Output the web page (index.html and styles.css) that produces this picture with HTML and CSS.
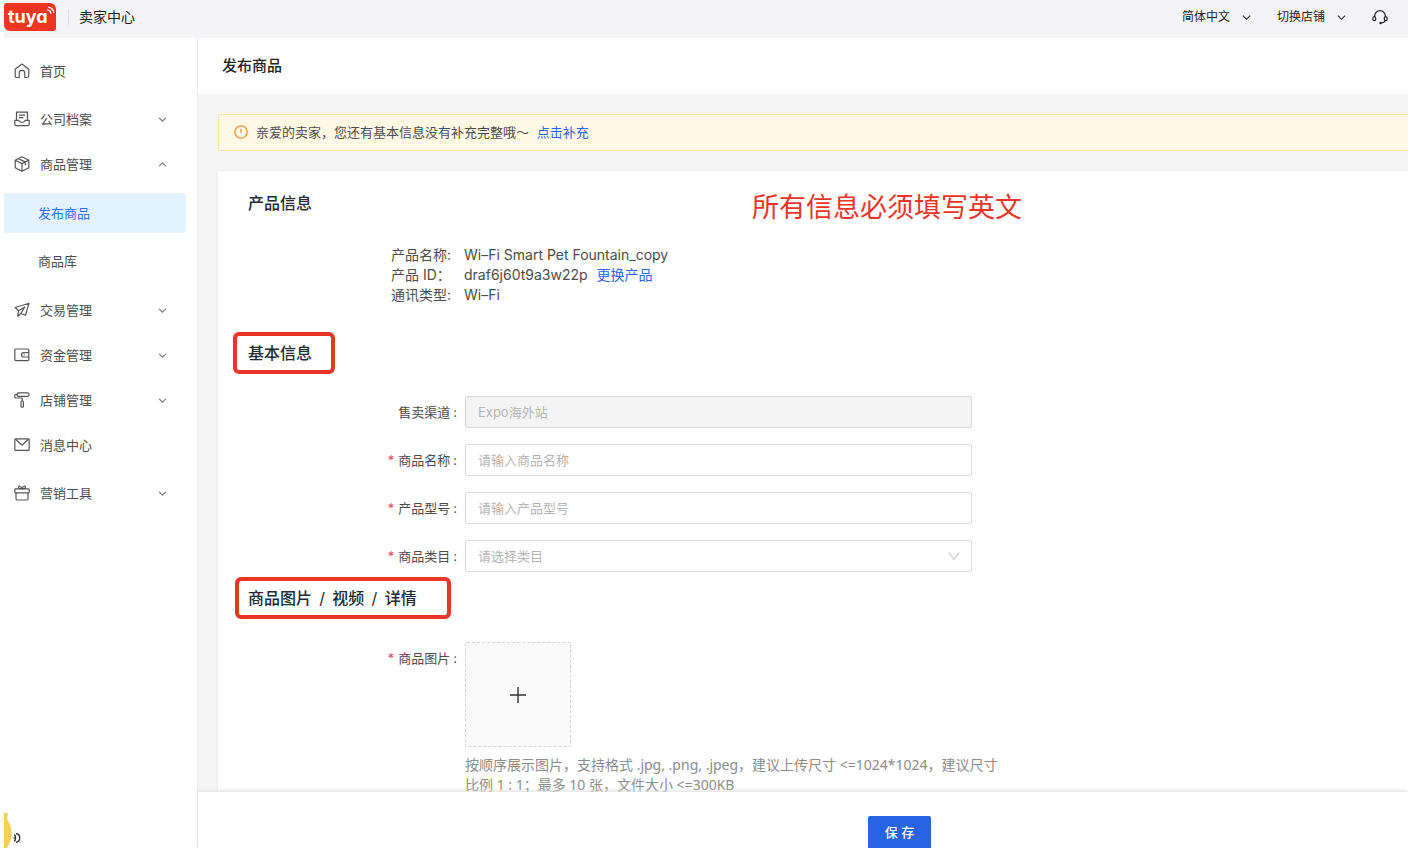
FILE: index.html
```html
<!DOCTYPE html>
<html lang="zh-CN">
<head>
<meta charset="utf-8">
<meta name="viewport" content="width=device-width, initial-scale=1">
<title>发布商品 - 卖家中心</title>
<link rel="stylesheet" href="styles.css">
</head>
<body>
<header class="topbar">
  <a class="logo" href="#">tuya
    <svg class="logo-waves" viewBox="0 0 10 10"><path d="M1 4.4a5 5 0 0 1 4.6 4.4M2.4 1.2a7.6 7.6 0 0 1 6.4 6.6"/></svg>
  </a>
  <span class="divider"></span>
  <span class="site-name">卖家中心</span>
  <div class="tools">
    <button class="tool" type="button">简体中文
      <svg class="caret" viewBox="0 0 10 10"><path d="M1 3l4 4 4-4"/></svg>
    </button>
    <button class="tool" type="button">切换店铺
      <svg class="caret" viewBox="0 0 10 10"><path d="M1 3l4 4 4-4"/></svg>
    </button>
    <button class="tool" type="button" aria-label="客服">
      <svg class="headset" viewBox="0 0 16 16"><path d="M2.700 8.200V7a5.300 5.300 0 0 1 10.600 0v1.200M13.200 11.500c-.5 1.300-2 2.300-3.900 2.500"/><ellipse cx="2.300" cy="9.700" rx="1.500" ry="2"/><ellipse cx="13.700" cy="9.700" rx="1.500" ry="2"/><circle class="solid" cx="8.600" cy="14" r="1.200"/></svg>
    </button>
  </div>
</header>

<div class="shell">
  <aside class="sidebar">
    <nav>
      <ul class="menu">
        <li class="spaced"><a class="item" href="#">
          <svg class="icon" viewBox="0 0 16 16"><path d="M3 14.500c-1.200 0-1.800-.6-1.800-1.800V6.300L8 1l6.800 5.300v6.400c0 1.200-.6 1.800-1.800 1.800h-2.200V10.200a2.800 2.800 0 0 0-5.600 0v4.300z"/></svg>
          <span class="name">首页</span></a></li>
        <li><a class="item" href="#">
          <svg class="icon" viewBox="0 0 16 16"><path d="M2.500 9V1.200h11V9M5 4.200h6M5 6.700h4.500M.8 9.300h4c.4 1.500 1.400 2 3.200 2s2.800-.5 3.200-2h4v4c0 1-.4 1.400-1.400 1.400H2.200c-1 0-1.400-.4-1.400-1.400z"/></svg>
          <span class="name">公司档案</span>
          <svg class="arrow" viewBox="0 0 8 8"><path d="M1 2.500l3 3 3-3"/></svg></a></li>
        <li><a class="item" href="#">
          <svg class="icon" viewBox="0 0 16 16"><path d="M8 .8l6.800 3.400v7.600L8 15.300l-6.800-3.500V4.200zM1.200 4.200L8 7.600l6.800-3.400M8 7.600v7.700M4.500 2.600l6.900 3.500v3.200"/></svg>
          <span class="name">商品管理</span>
          <svg class="arrow" viewBox="0 0 8 8"><path d="M1 5.500l3-3 3 3"/></svg></a>
          <ul class="submenu">
            <li><a class="subitem current" href="#">发布商品</a></li>
            <li><a class="subitem" href="#">商品库</a></li>
          </ul></li>
        <li><a class="item" href="#">
          <svg class="icon" viewBox="0 0 16 16"><path d="M15 1.200L1.200 5.500 4.600 8.800 3.600 14.200l3.200-2.700 4.700 1.800zM4.600 8.800L10.800 5 6.800 11.500"/></svg>
          <span class="name">交易管理</span>
          <svg class="arrow" viewBox="0 0 8 8"><path d="M1 2.500l3 3 3-3"/></svg></a></li>
        <li><a class="item" href="#">
          <svg class="icon" viewBox="0 0 16 16"><rect x=".8" y="2" width="14" height="11.600" rx="1"/><path d="M14.800 5.600H9.700a2.200 2.200 0 0 0 0 4.400h5.100M9.700 7.800h1"/></svg>
          <span class="name">资金管理</span>
          <svg class="arrow" viewBox="0 0 8 8"><path d="M1 2.500l3 3 3-3"/></svg></a></li>
        <li><a class="item" href="#">
          <svg class="icon" viewBox="0 0 16 16"><rect x="3" y=".8" width="12" height="3.600" rx="1.400"/><path d="M3 2.600H1.600c-.6 0-.9.4-.9 1V5c0 .7.4 1 1 1h6.500V9"/><rect x="7" y="9" width="2.400" height="6.200" rx="1"/></svg>
          <span class="name">店铺管理</span>
          <svg class="arrow" viewBox="0 0 8 8"><path d="M1 2.500l3 3 3-3"/></svg></a></li>
        <li class="spaced"><a class="item" href="#">
          <svg class="icon" viewBox="0 0 16 16"><rect x=".8" y="1.800" width="14.400" height="11.600" rx="1"/><path d="M1.600 2.300l5.600 5.200c.5.500 1.100.5 1.600 0l5.600-5.200"/></svg>
          <span class="name">消息中心</span></a></li>
        <li><a class="item" href="#">
          <svg class="icon" viewBox="0 0 16 16"><rect x=".8" y="3.800" width="14.400" height="4" rx=".8"/><path d="M2 7.800v6c0 .9.300 1.200 1.200 1.200h9.600c.9 0 1.200-.3 1.200-1.200v-6M8 3.800C6.800 3.800 4.500 3.400 4.500 2.200c0-1.500 2.800-1.600 3.500 1.600.7-3.200 3.500-3.100 3.500-1.600 0 1.200-2.300 1.600-3.500 1.600z"/></svg>
          <span class="name">营销工具</span>
          <svg class="arrow" viewBox="0 0 8 8"><path d="M1 2.500l3 3 3-3"/></svg></a></li>
      </ul>
    </nav>
  </aside>

  <main class="main">
    <div class="page-head"><h1>发布商品</h1></div>
    <div class="content">
      <div class="alert">
        <svg class="alert-icon" viewBox="0 0 14 14"><circle cx="7" cy="7" r="6.200"/><path d="M7 3.800v4"/></svg>
        <span>亲爱的卖家，您还有基本信息没有补充完整哦～ <a class="fill-link" href="#">点击补充</a></span>
      </div>

      <form class="card" id="product-form">
        <div class="card-head">
          <h2>产品信息</h2>
          <p class="note">所有信息必须填写英文</p>
        </div>
        <dl class="facts">
          <dt>产品名称:</dt><dd>Wi–Fi Smart Pet Fountain_copy</dd>
          <dt>产品 ID：</dt><dd>draf6j60t9a3w22p <a class="change" href="#">更换产品</a></dd>
          <dt>通讯类型:</dt><dd>Wi–Fi</dd>
        </dl>

        <h2 class="marked basic">基本信息</h2>
        <div class="fields">
          <label for="channel">售卖渠道</label>
          <input id="channel" type="text" placeholder="Expo海外站" disabled>
          <label class="required" for="name">商品名称</label>
          <input id="name" type="text" placeholder="请输入商品名称">
          <label class="required" for="model">产品型号</label>
          <input id="model" type="text" placeholder="请输入产品型号">
          <label class="required" for="category">商品类目</label>
          <div class="select">
            <select id="category"><option>请选择类目</option></select>
            <svg class="select-arrow" viewBox="0 0 12 12"><path d="M1 2.500l5 7 5-7"/></svg>
          </div>
        </div>

        <h2 class="marked media">商品图片 <span class="slash">/</span> 视频 <span class="slash">/</span> 详情</h2>
        <div class="fields upload">
          <label class="required" for="pictures">商品图片</label>
          <div>
            <button class="picker" id="pictures" type="button">
              <svg class="plus" viewBox="0 0 18 18"><path d="M9 1v16M1 9h16"/></svg>
            </button>
            <p class="hint">按顺序展示图片，支持格式 .jpg, .png, .jpeg，建议上传尺寸 &lt;=1024*1024，建议尺寸比例 1 : 1；最多 10 张，文件大小 &lt;=300KB</p>
          </div>
        </div>
      </form>
    </div>
    <footer class="actions">
      <button class="save" type="submit" form="product-form">保 存</button>
    </footer>
  </main>
</div>
<svg class="helper" viewBox="0 0 18 36"><path class="body" d="M0 1c3-1 5 1 3.500 3.500C2.800 6 3 7 4 9c5 8 5 17-1 27H0z"/><path class="wave" d="M10 23c2 0 2 6 0 6M12 21.500c5 1 5 7.500 0 9M9.500 26h1"/></svg>
</body>
</html>
```
FILE: styles.css
```css
* { box-sizing: border-box; }

body {
  margin: 0;
  padding-left: 4px;
  height: 100vh;
  overflow: hidden;
  display: flex;
  flex-direction: column;
  background: #fff;
  color: #4c4c4c;
  font: 13px/20px Inter, "Noto Sans CJK SC", sans-serif;
}

h1, h2, p, ul, dl, dd { margin: 0; padding: 0; }
ul { list-style: none; }
a { color: #2c62f0; text-decoration: none; }
button, input, select { font: inherit; color: inherit; }
svg { flex: none; fill: none; stroke: currentColor; }

.topbar {
  flex: none;
  height: 38px;
  display: flex;
  align-items: center;
  padding: 0 20px 4px 0;
  background: #f4f4f6;
  color: #222;
}
.logo {
  position: relative;
  width: 52px;
  height: 28px;
  padding-left: 4px;
  border-radius: 3px 6px 3px 6px;
  background: #ee3524;
  color: #fff;
  font-size: 18px;
  font-weight: 700;
  line-height: 27px;
  font-feature-settings: "cv11";
}
.logo-waves {
  position: absolute;
  top: 3px;
  right: 1px;
  width: 9px;
  height: 9px;
  stroke-width: 1.4;
}
.divider { width: 1px; height: 16px; margin: 0 10px 0 12px; background: #dcdce0; }
.site-name { font-size: 14px; }
.tools { margin-left: auto; display: flex; gap: 26px; }
.tool {
  display: flex;
  align-items: center;
  gap: 12px;
  padding: 0;
  border: 0;
  background: none;
  font-size: 12px;
}
.caret { width: 9px; height: 9px; stroke-width: 1.2; }
.headset { width: 16px; height: 16px; stroke-width: 1.2; }
.headset .solid { fill: currentColor; stroke: none; }

.shell { flex: 1; min-height: 0; display: flex; }
.sidebar {
  flex: none;
  width: 194px;
  padding: 13px 11px 0 0;
  border-right: 1px solid #ececee;
}
.menu { display: flex; flex-direction: column; gap: 5px; }
.spaced { margin-bottom: 3px; }
.item {
  display: flex;
  align-items: center;
  height: 40px;
  padding: 0 19px 0 10px;
  color: #4c4c4c;
}
.icon { width: 16px; height: 16px; margin-right: 10px; color: #555; stroke-width: 1.2; stroke-linejoin: round; }
.arrow { width: 9px; height: 9px; margin-left: auto; color: #777; }
.submenu { display: flex; flex-direction: column; gap: 8px; padding: 9px 0 4px; }
.subitem {
  display: block;
  padding-left: 34px;
  border-radius: 0 4px 4px 0;
  line-height: 40px;
  color: #4c4c4c;
}
.current { background: #e4f2fe; color: #2c6dff; }

.main { flex: 1; min-width: 0; display: flex; flex-direction: column; }
.page-head { flex: none; padding: 18px 24px; }
h1 { font-size: 15px; line-height: 20px; font-weight: 500; color: #222; }
.content {
  flex: 1;
  min-height: 0;
  overflow: hidden;
  padding: 20px 0 0 20px;
  background: #f5f5f6;
}
.alert {
  display: flex;
  align-items: center;
  gap: 8px;
  height: 37px;
  padding: 0 0 1px 15px;
  border: 1px solid #f8e3ab;
  border-right: 0;
  border-radius: 2px 0 0 2px;
  background: #fff8e5;
}
.alert-icon { width: 14px; height: 14px; color: #f08a3c; stroke-width: 1.3; }
.fill-link { margin-left: 4px; }

.card {
  margin-top: 20px;
  padding: 16px 0 30px;
  background: #fff;
  box-shadow: 0 0 3px #e4e4e6;
}
.card-head {
  display: grid;
  grid-template-columns: 504px 1fr;
  align-items: start;
  padding-left: 30px;
}
h2 { font-size: 16px; line-height: 32px; font-weight: 500; color: #222a33; }
.note { font-size: 27px; line-height: 42px; color: #e93527; }
.facts {
  display: grid;
  grid-template-columns: 73px 1fr;
  margin: 16px 0 0 173px;
  font-size: 14px;
}
.change { margin-left: 5px; }
.marked {
  width: fit-content;
  border: 4px solid #e93527;
  border-radius: 6px;
  line-height: 34px;
}
.basic { margin: 27px 0 0 15px; padding: 0 19px 0 11px; }
.media { margin: 5px 0 0 17px; padding: 0 30px 0 9px; }
.slash { padding: 0 3px; font-weight: 400; }

.fields {
  display: grid;
  grid-template-columns: 239px minmax(0, 507px);
  gap: 16px 8px;
  margin-top: 22px;
}
.fields label { text-align: right; line-height: 32px; }
.fields label::after { content: ":"; margin-left: 3px; }
.required::before { content: "*"; margin-right: 4px; color: #f04155; }
.fields input, .fields select {
  width: 100%;
  height: 32px;
  padding: 0 12px;
  border: 1px solid #d9d9d9;
  border-radius: 2px;
  background: #fff;
}
.fields select { appearance: none; color: #b5b5b5; }
.fields input::placeholder { color: #b5b5b5; opacity: 1; }
.fields input:disabled { background: #f4f4f4; }
.select { position: relative; }
.select-arrow {
  position: absolute;
  top: 10px;
  right: 12px;
  width: 12px;
  height: 12px;
  color: #b5b5b5;
  pointer-events: none;
}
.upload { grid-template-columns: 239px minmax(0, 542px); }
.upload { margin-top: 23px; }
.picker {
  display: grid;
  place-items: center;
  width: 106px;
  height: 105px;
  border: 1px dashed #d4d4d4;
  border-radius: 2px;
  background: #fafafa;
}
.plus { width: 18px; height: 18px; color: #333; stroke-width: 1.4; }
.hint {
  margin-top: 8px;
  font-family: "Noto Sans", "Noto Sans CJK SC", sans-serif;
  font-size: 14px;
  color: #8c8c8c;
}

.actions {
  position: relative;
  flex: none;
  height: 56px;
  padding: 24px 0 0 670px;
  background: #fff;
  box-shadow: 0 -1px 4px #dcdcdc;
}
.save {
  display: block;
  width: 63px;
  height: 32px;
  padding: 0;
  border: 0;
  border-radius: 2px 2px 0 0;
  background: #2863e6;
  color: #fff;
  font-weight: 500;
}
.helper {
  position: absolute;
  left: 4px;
  bottom: 0;
  width: 18px;
  height: 36px;
}
.helper .body { fill: #f8cf55; stroke: none; }
.helper .wave { stroke: #333; stroke-width: 1.4; }
```
